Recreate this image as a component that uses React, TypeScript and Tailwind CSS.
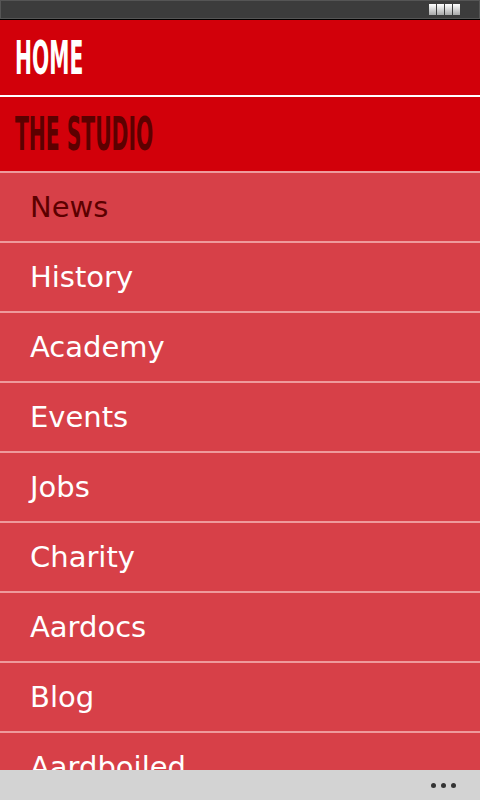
import React from "react";

const items = ["News", "History", "Academy", "Events", "Jobs", "Charity", "Aardocs", "Blog", "Aardboiled"];

function Heading({ label, dark }: { label: string; dark?: boolean }) {
  return (
    <div className="flex h-full items-center pl-[15px]">
      <span
        className={`inline-block origin-left scale-x-[0.49] whitespace-nowrap text-[46px] font-bold leading-none ${
          dark ? "text-[#5c0000]" : "text-white"
        }`}
        style={{ fontFamily: '"DejaVu Sans Condensed", "DejaVu Sans", sans-serif' }}
      >
        {label}
      </span>
    </div>
  );
}

export default function App() {
  return (
    <div className="flex h-[800px] w-[480px] flex-col overflow-hidden bg-[#d74048]">
      {/* status bar */}
      <div className="h-[20px] shrink-0 border-b border-black bg-[#3c3c3c]">
        <div className="flex h-[19px] items-center justify-end border border-[#555] pr-[19px]">
          <div className="flex gap-[1px]">
            {[0, 1, 2, 3].map((i) => (
              <div key={i} className="h-[11px] w-[7px] bg-gradient-to-b from-white to-[#a9a9a9]" />
            ))}
          </div>
        </div>
      </div>

      <div className="flex-1 overflow-hidden">
        <div className="h-[75px] bg-[#d2000a]">
          <Heading label="HOME" />
        </div>
        <div className="h-[76px] border-t-2 border-white bg-[#d2000a]">
          <Heading label="THE STUDIO" dark />
        </div>
        {items.map((item, i) => (
          <div key={item} className="flex h-[70px] items-center border-t-2 border-[#ee9a9c] pl-[30px]">
            <span
              className={`text-[29px] leading-none ${i === 0 ? "text-[#5c0000]" : "text-white"}`}
              style={{ fontFamily: '"DejaVu Sans", sans-serif' }}
            >
              {item}
            </span>
          </div>
        ))}
      </div>

      {/* bottom bar */}
      <div className="flex h-[30px] shrink-0 items-center justify-end gap-[5px] bg-[#d3d3d3] pr-[24px]">
        <div className="h-[5px] w-[5px] rounded-full bg-[#333]" />
        <div className="h-[5px] w-[5px] rounded-full bg-[#333]" />
        <div className="h-[5px] w-[5px] rounded-full bg-[#333]" />
      </div>
    </div>
  );
}
